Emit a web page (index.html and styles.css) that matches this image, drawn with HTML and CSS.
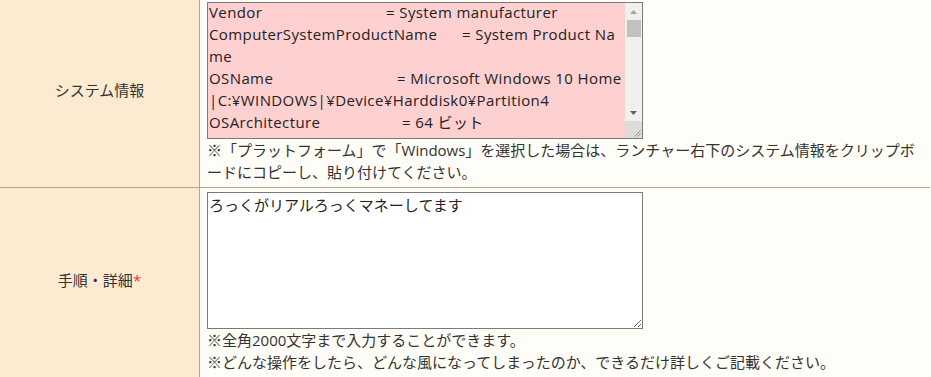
FILE: index.html
```html
<!DOCTYPE html>
<html lang="ja">
<head>
<meta charset="utf-8">
<title>お問い合わせ</title>
<link rel="stylesheet" href="styles.css">
</head>
<body>
<div class="form">
  <div class="label">システム情報</div>
  <div class="value">
    <div class="sysinfo" role="textbox" aria-multiline="true" aria-label="システム情報">
      <div class="sysinfo-text">
        <div class="line"><span class="key k-vendor">Vendor</span>= System manufacturer</div>
        <div class="line"><span class="key k-product">ComputerSystemProductName</span>= System Product Na</div>
        <div class="line">me</div>
        <div class="line"><span class="key k-osname">OSName</span>= Microsoft Windows 10 Home</div>
        <div class="line">|C:¥WINDOWS|¥Device¥Harddisk0¥Partition4</div>
        <div class="line"><span class="key k-arch">OSArchitecture</span>= 64 ビット</div>
      </div>
      <div class="vscroll" aria-hidden="true">
        <div class="sb-btn">
          <svg width="7" height="4" viewBox="0 0 7 4"><path d="M0 4 L3.5 0 L7 4Z" fill="#a3a3a3"/></svg>
        </div>
        <div class="sb-track"><div class="sb-thumb"></div></div>
        <div class="sb-btn">
          <svg width="7" height="4" viewBox="0 0 7 4"><path d="M0 0 L3.5 4 L7 0Z" fill="#606060"/></svg>
        </div>
        <div class="sb-corner">
          <svg width="17" height="17" viewBox="0 0 17 17"><path d="M15.5 9.5 L9.5 15.5 M15.5 12.5 L12.5 15.5" stroke="#8c8c8c" stroke-width="1" fill="none"/></svg>
        </div>
      </div>
    </div>
    <p class="note">※「プラットフォーム」で「Windows」を選択した場合は、ランチャー右下のシステム情報をクリップボードにコピーし、貼り付けてください。</p>
  </div>

  <div class="label">手順・詳細<span class="req">*</span></div>
  <div class="value">
    <textarea class="detail" aria-label="手順・詳細">ろっくがリアルろっくマネーしてます</textarea>
    <p class="note">※全角2000文字まで入力することができます。</p>
    <p class="note">※どんな操作をしたら、どんな風になってしまったのか、できるだけ詳しくご記載ください。</p>
  </div>
</div>
</body>
</html>
```
FILE: styles.css
```css
html, body {
  margin: 0;
  padding: 0;
}

body {
  background: #fffdf7;
  color: #333;
  font-family: "Open Sans", "Noto Sans CJK JP", sans-serif;
  font-size: 15px;
  line-height: 22px;
}

.form {
  display: grid;
  grid-template-columns: 200px 730px;
  width: 931px;
  margin-top: -2px;
  border-right: 1px solid #bba583;
}

.label {
  display: flex;
  align-items: center;
  justify-content: center;
  padding-bottom: 5px;
  background: #fdebd1;
  border-right: 1px solid #bba583;
  border-bottom: 1px solid #bba583;
}

.req {
  color: #e23b3b;
}

.value {
  background: #fffdf7;
  padding: 4px 10px 4px 7px;
  border-bottom: 1px solid #bba583;
}

.note {
  margin: 0;
}

.sysinfo,
.detail {
  box-sizing: border-box;
  width: 436px;
  height: 137px;
  margin: 0;
  border: 1px solid #7a7a7a;
  font-family: inherit;
  font-size: 15px;
  line-height: 22px;
  color: #222;
}

.sysinfo {
  display: flex;
  background: #ffd0d0;
  overflow: hidden;
}

.sysinfo-text {
  flex: 1;
  min-width: 0;
  padding: 0 1px;
  margin-top: -2px;
  letter-spacing: 0.4px;
}

.line {
  white-space: nowrap;
}

.key {
  display: inline-block;
}

.k-vendor { width: 177px; }
.k-product { width: 253px; }
.k-osname { width: 188px; }
.k-arch { width: 193px; }

.vscroll {
  flex: 0 0 17px;
  display: flex;
  flex-direction: column;
  background: #f0f0f0;
}

.sb-btn {
  flex: 0 0 17px;
  display: flex;
  align-items: center;
  justify-content: center;
}

.sb-track {
  flex: 1;
}

.sb-thumb {
  height: 17px;
  margin: 0 1px 0 2px;
  background: #c1c1c1;
}

.sb-corner {
  flex: 0 0 17px;
  background: #dcdcdc;
}

.sb-corner svg {
  display: block;
}

.detail {
  display: block;
  background: #fff;
  padding: 1px 1px;
  resize: both;
}
```
